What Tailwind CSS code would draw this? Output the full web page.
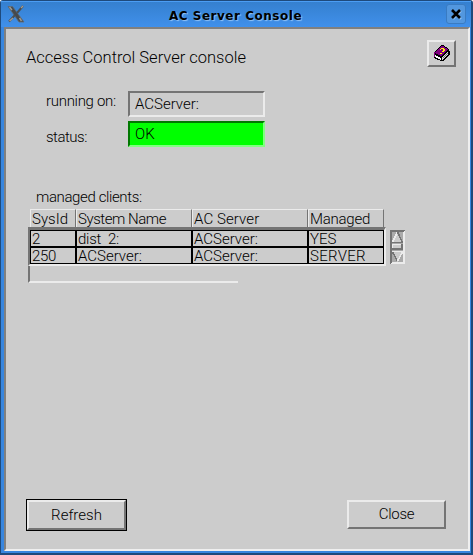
<!DOCTYPE html>
<html lang="en">
<head>
<meta charset="utf-8">
<title>AC Server Console</title>
<script src="https://cdn.jsdelivr.net/npm/@tailwindcss/browser@4"></script>
</head>
<body class="w-[473px] h-[555px] overflow-hidden bg-white text-black font-[Roboto,'Liberation_Sans',sans-serif] font-light text-[15px] leading-[16px] whitespace-nowrap">
<div class="w-[473px] h-[555px] flex flex-col rounded-t-[3px] bg-[#3886df] border-t border-l border-r-2 border-b-2 border-[#1e4a7c]">
  <header class="h-[26px] shrink-0 flex items-start bg-linear-to-b from-[#3580cf] to-[#4090eb] border-t border-[#4b9df4]">
    <svg class="w-[18px] h-[18px] ml-[6px] mt-[3px]" viewBox="0 0 18 18" fill="none">
      <path d="M1 1.5H5.5L17 17H12Z" fill="#45494c" stroke="#626b72" stroke-width=".8"/>
      <path d="M16 1L10 8M8 10L2 16.5" stroke="#4b4f52" stroke-width="2"/>
      <path d="M2.500 2L5 5M12.500 13L14.500 16M2.500 16L6 13M14 3L16 1" stroke="#a19b90" stroke-width="1.4"/>
    </svg>
    <h1 class="flex-1 text-center pt-[6px] font-['DejaVu_Sans',sans-serif] font-bold text-[12px] leading-[16px] tracking-[0.52px] [text-shadow:1px_1px_1px_#92c4f7]">AC Server Console</h1>
    <button class="w-[20px] h-[20px] mr-[5px] mt-[2px] flex items-center justify-center rounded-[3px] border border-[#397bc2] bg-[#5297df]" aria-label="Close window">
      <svg class="w-[12px] h-[12px]" viewBox="0 0 12 12" fill="none"><path d="M3 3L11 11M11 3L3 11" stroke="#8abdf0" stroke-width="2.4"/><path d="M2 2L10 10M10 2L2 10" stroke="#000" stroke-width="2.6"/></svg>
    </button>
  </header>
  <main class="ml-[3px] w-[466px] h-[524px] flex flex-col bg-[#cccccc] border-2 border-t-[#808080] border-l-[#808080] border-r-[#efefef] border-b-[#efefef]">
    <div class="flex justify-between pl-[20px] pr-[12px] pt-[11px] h-[62px] shrink-0">
      <p class="pt-[9px] text-[16.5px] leading-[18px]">Access Control Server console</p>
      <button class="w-[29px] h-[27px] border-2 border-t-[#ebebeb] border-l-[#ebebeb] border-r-[#747474] border-b-[#747474] flex items-center justify-center" aria-label="Help">
        <svg class="w-[17px] h-[17px] mr-px mb-px" viewBox="0 0 17 17" shape-rendering="crispEdges">
          <path d="M8 0H10L16 4V6L17 7V9L10 16H8L1 13V8Z" fill="#000"/>
          <path d="M8 1H10L15 4L8 11L2 8Z" fill="#800080"/>
          <path d="M2 10L8 13V15L2 12Z" fill="#fff"/>
          <path d="M9 12L15 6V9L9 15Z" fill="#d8d8d8"/>
          <path d="M1 7H2V12H1Z" fill="#800080"/>
          <path d="M10 13L15 8" stroke="#777" fill="none"/>
          <path d="M7 4H8V3H11V4H12V6H11V7H9V6H10V4H8V5H7ZM7 8H9V9H7Z" fill="#ffff00"/>
        </svg>
      </button>
    </div>
    <div class="flex flex-col gap-[4px] pl-[40px] shrink-0">
      <div class="flex h-[26px]">
        <label class="w-[82px] pt-[2px] tracking-[-0.3px]">running on:</label>
        <div class="w-[137px] pl-[5px] pt-[3px] border-2 border-t-[#747474] border-l-[#747474] border-r-[#ebebeb] border-b-[#ebebeb]">ACServer:</div>
      </div>
      <div class="flex h-[26px]">
        <label class="w-[82px] pt-[8px] tracking-[-0.5px]">status:</label>
        <div class="w-[137px] pl-[5px] pt-[3px] bg-[#00ff00] border-2 border-t-[#007800] border-l-[#007800] border-r-[#80ff80] border-b-[#80ff80]">OK</div>
      </div>
    </div>
    <p class="mt-[42px] ml-[30px] h-[20px] shrink-0 tracking-[-0.38px]">managed clients:</p>
    <section class="flex shrink-0 ml-[22px] h-[74px]">
      <div class="w-[358px]">
        <div class="ml-[2px] w-[354px] h-[18px] grid grid-cols-[46px_116px_116px_76px] *:border-t *:border-l *:border-r *:border-t-[#ebebeb] *:border-l-[#ebebeb] *:border-r-[#747474] *:pl-[1px] *:pt-px">
          <div>SysId</div><div class="tracking-[-0.45px]">System Name</div><div class="tracking-[0.1px]">AC Server</div><div class="tracking-[-0.25px]">Managed</div>
        </div>
        <div class="border-t-3 border-l-2 border-r-2 border-b-2 border-t-[#747474] border-l-[#747474] border-r-[#ebebeb] border-b-[#ebebeb]">
          <div class="w-[354px] grid grid-cols-[46px_116px_116px_76px] grid-rows-[17px_17px] *:border *:border-black *:pl-[1px] *:leading-[16px]">
            <div>2</div><div class="whitespace-pre tracking-[-0.25px]">dist  2:</div><div>ACServer:</div><div>YES</div>
            <div class="tracking-[-0.3px]">250</div><div>ACServer:</div><div>ACServer:</div><div class="tracking-[0.3px]">SERVER</div>
          </div>
        </div>
        <div class="w-[210px] h-[17px] border-l-2 border-b-2 border-l-[#747474] border-b-[#ebebeb]"></div>
      </div>
      <svg class="w-[15px] h-[34px] ml-[4px] mt-[21px]" viewBox="0 0 15 34" shape-rendering="crispEdges" fill="none">
        <path d="M0 0H15V34H0Z" fill="#aaa"/>
        <path d="M0 0H15L13 2H2V32L0 34Z" fill="#747474"/>
        <path d="M15 0V34H0L2 32H13V2Z" fill="#ebebeb"/>
        <path d="M7.5 2L13 13H2Z" fill="#ccc"/>
        <path d="M7.5 2L2.5 12" stroke="#ebebeb" stroke-width="1.5"/>
        <path d="M7.5 2L12.5 12.5H2" stroke="#747474" stroke-width="1.5"/>
        <path d="M2 14H13V20H2Z" fill="#ccc"/><path d="M2.500 20V14.5H13" stroke="#ebebeb"/><path d="M2 19H12V14" stroke="#747474" stroke-width="2"/>
        <path d="M2 21H13L7.5 32Z" fill="#ccc"/>
        <path d="M13 21.5H2" stroke="#ebebeb"/><path d="M2.5 22L7.5 31" stroke="#747474" stroke-width="1.5"/><path d="M12.5 22L7.5 31" stroke="#ebebeb" stroke-width="1.5"/>
      </svg>
    </section>
    <footer class="mt-auto mb-[18px] pl-[20px] pr-[22px] flex items-center justify-between">
      <button class="w-[101px] h-[32px] border border-black"><span class="flex w-full h-full items-center justify-center border-2 border-t-[#ebebeb] border-l-[#ebebeb] border-r-[#747474] border-b-[#747474]">Refresh</span></button>
      <button class="w-[99px] h-[29px] mb-[2px] border-2 border-t-[#ebebeb] border-l-[#ebebeb] border-r-[#747474] border-b-[#747474] tracking-[-0.3px]">Close</button>
    </footer>
  </main>
</div>
</body>
</html>
